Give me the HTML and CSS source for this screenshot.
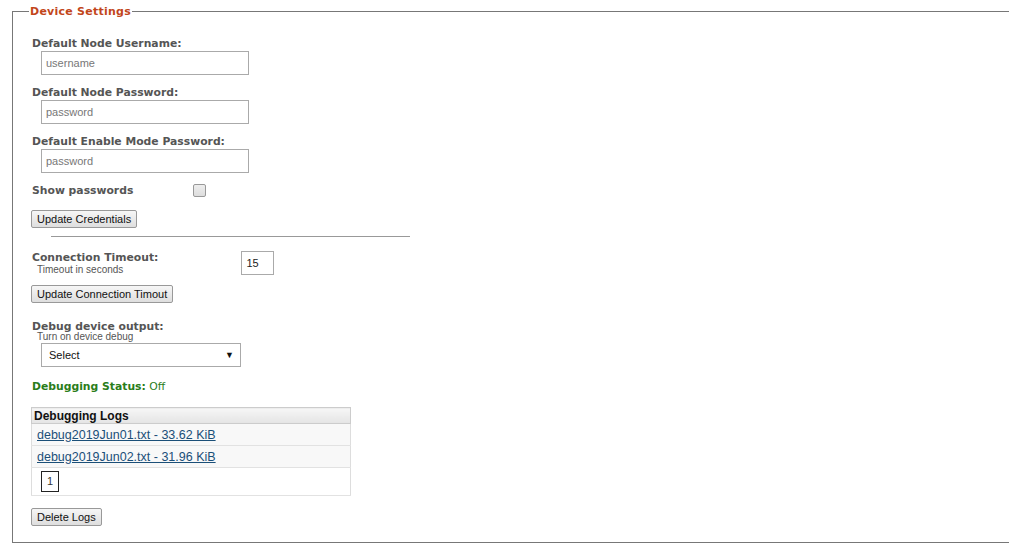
FILE: index.html
```html
<!DOCTYPE html>
<html lang="en">
<head>
    <meta charset="UTF-8">
    <title>Device Settings</title>
    <link rel="stylesheet" href="styles.css">
</head>
<body>

<fieldset class="settings">
    <legend class="settings-title">Device Settings</legend>

    <div class="field">
        <label class="field-label">Default Node Username:</label>
        <input type="text" class="text-input" placeholder="username">
    </div>
    <div class="field">
        <label class="field-label">Default Node Password:</label>
        <input type="password" class="text-input" placeholder="password">
    </div>
    <div class="field">
        <label class="field-label">Default Enable Mode Password:</label>
        <input type="password" class="text-input" placeholder="password">
    </div>

    <div class="check-row">
        <label class="field-label">Show passwords</label>
        <span class="fake-check"></span>
    </div>

    <button class="btn">Update Credentials</button>

    <hr class="divider">

    <div class="timeout-row">
        <div>
            <div class="field-label">Connection Timeout:</div>
            <div class="hint">Timeout in seconds</div>
        </div>
        <input type="text" class="small-input" value="15">
    </div>
    <button class="btn">Update Connection Timout</button>

    <div class="debug-block">
        <div class="field-label">Debug device output:</div>
        <div class="hint hint-tight">Turn on device debug</div>
        <div class="select-box">
            <span>Select</span>
            <span class="arrow">&#9660;</span>
        </div>
    </div>

    <div class="status"><b>Debugging Status:</b> Off</div>

    <table class="logs">
        <tr><th>Debugging Logs</th></tr>
        <tr><td><a href="#">debug2019Jun01.txt - 33.62 KiB</a></td></tr>
        <tr><td><a href="#">debug2019Jun02.txt - 31.96 KiB</a></td></tr>
        <tr><td class="pager-cell"><span class="page-num">1</span></td></tr>
    </table>

    <button class="btn">Delete Logs</button>
</fieldset>

</body>
</html>
```

FILE: styles.css
```css
/* Page */
body {
    margin: 0;
    padding: 5px 0 0 12px;
    background-color: #fff;
    font-family: "Liberation Sans", Arial, sans-serif;
    font-size: 12px;
    color: #333;
}

/* Cadre principal */
.settings {
    border: 1px solid #777;
    border-right: none;
    margin: 0;
    padding: 19px 0 16px 19px;
}

.settings-title {
    color: #c2461b;
    font-family: "DejaVu Sans", Verdana, sans-serif;
    font-weight: bold;
    font-size: 11px;
    letter-spacing: 0.25px;
    padding: 0 1px;
    margin-left: -3px;
}

/* Libellés */
.field-label {
    font-family: "DejaVu Sans", Verdana, sans-serif;
    font-weight: bold;
    font-size: 10.8px;
    color: #555;
    display: block;
}

.field {
    margin-bottom: 11px;
}

.field .field-label {
    margin-bottom: 1px;
}

.text-input {
    display: block;
    width: 208px;
    height: 24px;
    margin-left: 9px;
    padding: 0 4px;
    box-sizing: border-box;
    border: 1px solid #aaa;
    font-family: "Liberation Sans", Arial, sans-serif;
    font-size: 11px;
    color: #555;
}

.text-input::placeholder {
    color: #777;
}

.check-row {
    display: flex;
    align-items: center;
    gap: 60px;
    margin-top: 1px;
    margin-bottom: 13px;
}

.fake-check {
    width: 11px;
    height: 11px;
    border: 1px solid #999;
    border-radius: 2px;
    background: linear-gradient(#eee, #ddd);
}

/* Boutons */
.btn {
    display: block;
    margin-left: -1px;
    font-family: "Liberation Sans", Arial, sans-serif;
    font-size: 11px;
    color: #111;
    padding: 0 5px;
    height: 18px;
    border: 1px solid #999;
    border-radius: 2px;
    background: linear-gradient(#f6f6f6, #dedede);
}

.divider {
    width: 359px;
    margin: 8px 0 14px 19px;
    border: none;
    border-top: 1px solid #999;
}

.timeout-row {
    display: flex;
    align-items: flex-start;
    gap: 83px;
    margin-bottom: 10px;
}

.hint {
    font-size: 10px;
    color: #555;
    margin-left: 5px;
    line-height: 11px;
}

.hint-tight {
    margin-top: -1px;
    line-height: 10px;
}

.small-input {
    width: 33px;
    height: 24px;
    box-sizing: border-box;
    border: 1px solid #aaa;
    padding: 0 4px;
    font-family: "Liberation Sans", Arial, sans-serif;
    font-size: 11px;
    color: #222;
}

.debug-block {
    margin-top: 17px;
}

.select-box {
    display: flex;
    justify-content: space-between;
    align-items: center;
    width: 200px;
    height: 24px;
    box-sizing: border-box;
    margin: 1px 0 0 9px;
    padding: 0 6px 0 7px;
    border: 1px solid #aaa;
    font-size: 11px;
    color: #111;
}

.arrow {
    font-size: 9px;
}

.status {
    margin: 13px 0 14px;
    font-family: "DejaVu Sans", Verdana, sans-serif;
    font-size: 10.8px;
    color: #2a7d1a;
}

/* Tableau des journaux */
.logs {
    width: 320px;
    margin-left: -1px;
    border-collapse: collapse;
    border: 1px solid #ddd;
    margin-bottom: 12px;
}

.logs th {
    text-align: left;
    font-size: 12px;
    color: #111;
    padding: 0 2px;
    height: 15px;
    border: 1px solid #ccc;
    background: linear-gradient(#f6f6f6, #e4e4e4);
}

.logs td {
    height: 21px;
    padding: 0 5px;
    border-bottom: 1px solid #e2e2e2;
    background: #f8f8f8;
    font-size: 12.5px;
}

.logs a {
    color: #1b4f78;
}

.logs .pager-cell {
    background: #fff;
    height: 27px;
    padding-left: 9px;
}

.page-num {
    display: inline-block;
    width: 16px;
    height: 19px;
    line-height: 19px;
    text-align: center;
    border: 1px solid #222;
    font-size: 11px;
}
```
